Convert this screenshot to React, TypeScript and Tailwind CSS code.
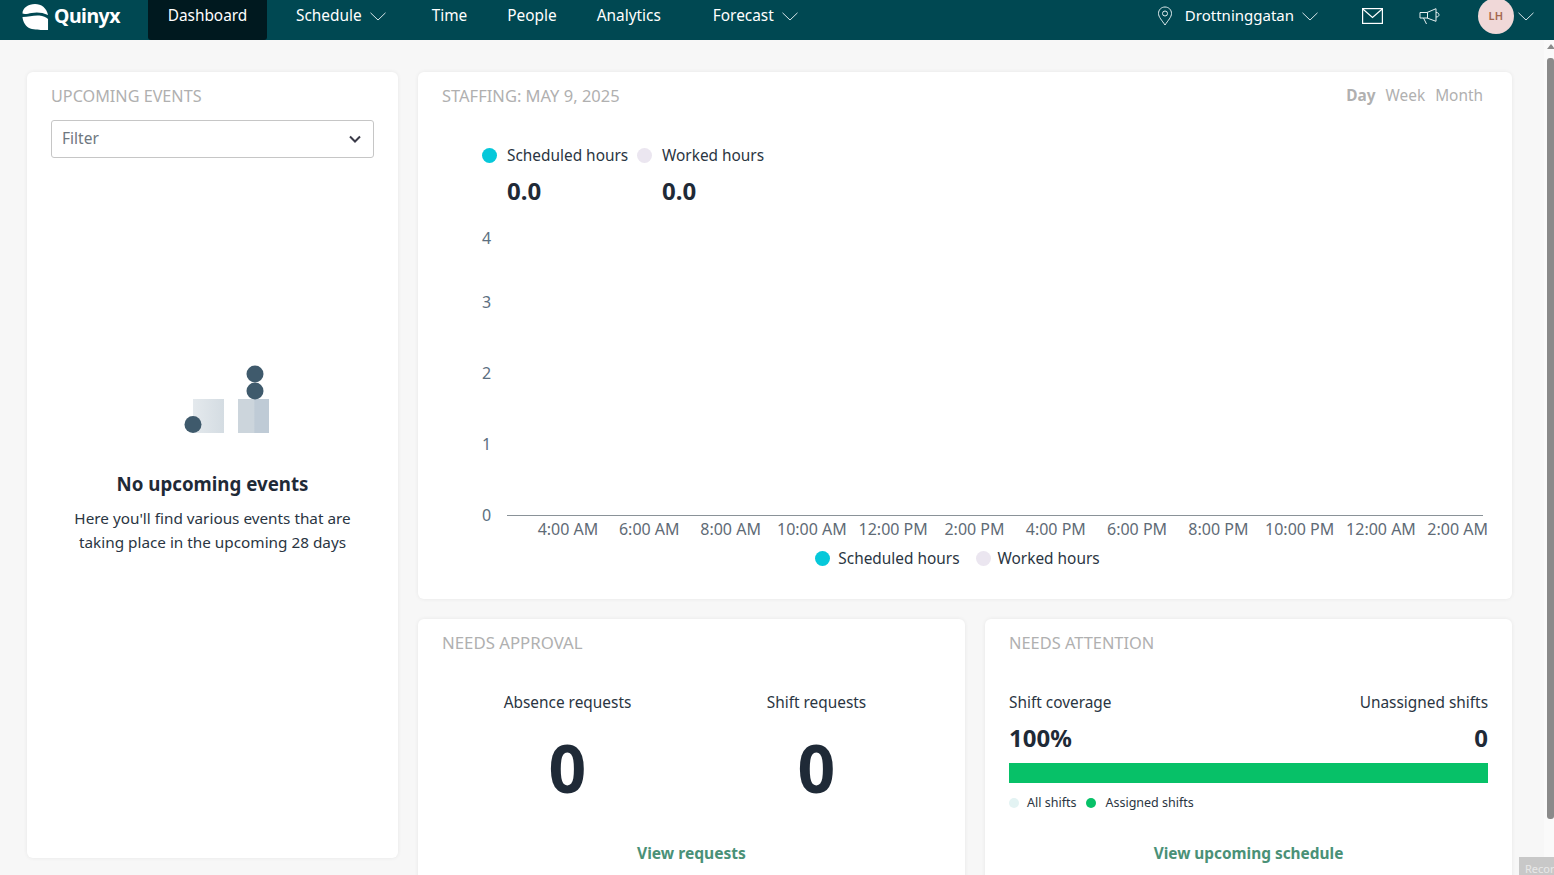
import React from "react";

const F = "[font-family:'Noto_Sans',sans-serif]";

function Chevron({ className = "" }: { className?: string }) {
  return (
    <svg viewBox="0 0 16 9" className={`w-[16px] h-[9px] ${className}`} fill="none" stroke="currentColor" strokeWidth="1">
      <path d="M0.5 0.8 L8 8 L15.5 0.8" />
    </svg>
  );
}

function NavItem({ label, active, chevron, className = "" }: { label: string; active?: boolean; chevron?: boolean; className?: string }) {
  return (
    <div className={`h-full pb-[8px] flex items-center gap-[8px] text-white text-[15.4px] ${active ? "bg-[#00191f] rounded-b-[3px]" : ""} ${className}`}>
      <span>{label}</span>
      {chevron && <Chevron className="text-[#d5e4e7]" />}
    </div>
  );
}

function Logo() {
  return (
    <svg viewBox="0 0 28 28" className="w-[27px] h-[27px]">
      <path d="M0.500 11C0.500 5 6.500 1 13.500 1 20 1 25.500 5 27 12.500 21 9.500 15 9.300 10 10.300 6.500 11 3 11.800 0.500 11Z" fill="#fff" />
      <path d="M0.500 14.500C7 14.500 12 12.500 18 13 22 13.300 25 14.800 27 16.500L27 28 21 28C20 28 13 28 8.500 26.500 4 24.500 1 20 0.500 14.500Z" fill="#fff" />
    </svg>
  );
}

function Dot({ color, size = "w-[15px] h-[15px]" }: { color: string; size?: string }) {
  return <span className={`inline-block rounded-full ${size} ${color}`} />;
}

function Card({ className = "", children }: { className?: string; children: React.ReactNode }) {
  return <div className={`bg-white rounded-[6px] shadow-[0_0_4px_rgba(0,0,0,0.07)] ${className}`}>{children}</div>;
}

function Title({ children, size = "text-[16.2px]" }: { children: React.ReactNode; size?: string }) {
  return <div className={`${size} leading-[20px] text-[#b0b0b0]`}>{children}</div>;
}

const hours = ["4:00 AM", "6:00 AM", "8:00 AM", "10:00 AM", "12:00 PM", "2:00 PM", "4:00 PM", "6:00 PM", "8:00 PM", "10:00 PM", "12:00 AM"];
const yTicks: [string, number][] = [["4", 244], ["3", 308], ["2", 379], ["1", 450], ["0", 521]];

function Chart() {
  return (
    <svg viewBox="0 0 1094 320" className="mt-[16px] w-[1094px] h-[320px] block" fontFamily="'Noto Sans', sans-serif">
      {yTicks.map(([t, y]) => (
        <text key={t} x="64" y={y - 224} fontSize="16" fill="#5c6f80">{t}</text>
      ))}
      <line x1="89" x2="1065" y1="291.500" y2="291.500" stroke="#8a9298" strokeWidth="1" />
      {hours.map((h, i) => (
        <text key={h + i} x={150 + i * 81.3} y="311" fontSize="16" textAnchor="middle" fill="#5f6b76">{h}</text>
      ))}
      <text x="1070" y="311" fontSize="16" textAnchor="end" fill="#5f6b76">2:00 AM</text>
    </svg>
  );
}

export default function App() {
  return (
    <div className={`relative w-[1554px] h-[875px] overflow-hidden bg-[#f7f7f7] flex flex-col text-[#1f2a37] ${F}`}>
      <header className="h-[40px] shrink-0 bg-[#004852] flex items-center text-white">
        <div className="w-[148px] h-full pb-[8px] flex items-center pl-[22px] gap-[5px]">
          <Logo />
          <span className="text-[19.500px] font-bold tracking-[-0.5px]">Quinyx</span>
        </div>
        <NavItem label="Dashboard" active className="w-[119px] justify-center" />
        <NavItem label="Schedule" chevron className="ml-[29px]" />
        <NavItem label="Time" className="ml-[46px]" />
        <NavItem label="People" className="ml-[40px]" />
        <NavItem label="Analytics" className="ml-[40px]" />
        <NavItem label="Forecast" chevron className="ml-[52px]" />
        <div className="ml-auto flex items-center h-full pb-[8px]">
          <svg viewBox="0 0 16 20" className="w-[16px] h-[20px] text-[#e3eef0]" fill="none" stroke="currentColor" strokeWidth="1">
            <path d="M8 19C5 14.500 1.500 11 1.500 7.500 1.500 3.700 4.400 1 8 1s6.500 2.700 6.500 6.500C14.500 11 11 14.500 8 19Z" />
            <circle cx="8" cy="7.500" r="2.500" />
          </svg>
          <span className="ml-[12px] mb-[2px] text-[15px] text-white">Drottninggatan</span>
          <Chevron className="ml-[8px] text-[#d5e4e7]" />
          <svg viewBox="0 0 21 16" className="w-[21px] h-[16px] ml-[44px]" fill="none" stroke="#fff" strokeWidth="1.200">
            <rect x="0.600" y="0.600" width="19.800" height="14.800" />
            <path d="M0.800 1L10.500 9.500 20.200 1" />
          </svg>
          <svg viewBox="0 0 21 17" className="w-[21px] h-[17px] ml-[36px]" fill="none" stroke="#e8f0f1" strokeWidth="1">
            <path d="M1 4.500H8L17 0.700V13.300L8 10H1Z" />
            <path d="M17 4.500C19 4.500 20 5.500 20 6.800S19 9 17 9" />
            <path d="M4.500 10L7.500 16" />
            <path d="M8.500 4.500V10" />
          </svg>
          <div className="ml-[38px] w-[36px] h-[36px] shrink-0 rounded-full bg-[#f0d8d8] flex items-center justify-center text-[11px] font-semibold text-[#a4674f] tracking-[0.3px]">LH</div>
          <Chevron className="ml-[4px] mr-[20px] text-[#d5e4e7]" />
        </div>
      </header>

      <main className="flex-1 min-h-0 flex items-start gap-[20px] pl-[27px] pt-[32px]">
        <Card className="w-[371px] h-[786px] shrink-0 px-[24px] pt-[14px] flex flex-col">
          <Title>UPCOMING EVENTS</Title>
          <div className="mt-[14px] h-[38px] border border-[#c6c6c6] rounded-[3px] flex items-center justify-between pl-[10px] pr-[12px]">
            <span className="text-[15.500px] text-[#6f7780]">Filter</span>
            <svg viewBox="0 0 12 8" className="w-[12px] h-[8px]" fill="none" stroke="#3a3a48" strokeWidth="2"><path d="M1 1.500L6 6.500 11 1.500" /></svg>
          </div>
          <div className="mt-[207px] flex flex-col items-center">
            <svg viewBox="11 0 86 70" className="w-[86px] h-[70px] ml-[29px]">
              <defs>
                <linearGradient id="a" x1="0" x2="1" y1="0" y2="0"><stop offset="0" stopColor="#e4e9ed" /><stop offset="1" stopColor="#d4dce2" /></linearGradient>
                <linearGradient id="b" x1="0" x2="1" y1="0" y2="0"><stop offset="0" stopColor="#ccd5dc" /><stop offset="0.5" stopColor="#ccd5dc" /><stop offset="0.55" stopColor="#bfcbd6" /><stop offset="1" stopColor="#bfcbd6" /></linearGradient>
              </defs>
              <rect x="20" y="34" width="31" height="34" fill="url(#a)" />
              <rect x="65" y="34" width="31" height="34" fill="url(#b)" />
              <circle cx="20" cy="59.500" r="8.500" fill="#3f5a6c" />
              <circle cx="82" cy="9" r="8.500" fill="#3f5a6c" />
              <circle cx="82" cy="26" r="8.500" fill="#3f5a6c" />
            </svg>
            <div className="mt-[36px] text-[18.700px] leading-[26px] font-bold text-[#1f2a37]">No upcoming events</div>
            <div className="mt-[9px] text-[15.300px] leading-[24px] text-center text-[#2a3542]">
              Here you'll find various events that are<br />taking place in the upcoming 28 days
            </div>
          </div>
        </Card>

        <div className="w-[1094px] shrink-0 flex flex-col gap-[20px]">
          <Card className="h-[527px] pt-[14px]">
            <div className="flex justify-between px-[24px] pr-[29px]">
              <Title size="text-[16.500px]">STAFFING: MAY 9, 2025</Title>
              <div className="flex gap-[10px] text-[15.400px] leading-[20px] text-[#b0b0b0]">
                <span className="font-bold">Day</span><span>Week</span><span>Month</span>
              </div>
            </div>
            <div className="mt-[38px] ml-[64px] flex text-[15.400px] leading-[20px] text-[#2a3542]">
              <div className="w-[155px]">
                <div className="flex items-center gap-[10px]"><Dot color="bg-[#06c8da]" /><span className="pt-[2px]">Scheduled hours</span></div>
                <div className="ml-[25px] mt-[8px] text-[24px] leading-[34px] font-bold text-[#1f2a37]">0.0</div>
              </div>
              <div>
                <div className="flex items-center gap-[10px]"><Dot color="bg-[#ebe6f0]" /><span className="pt-[2px]">Worked hours</span></div>
                <div className="ml-[25px] mt-[8px] text-[24px] leading-[34px] font-bold text-[#1f2a37]">0.0</div>
              </div>
            </div>
            <Chart />
            <div className="mt-[3px] flex justify-center gap-[16px] ml-[-15px] text-[15.400px] leading-[20px] text-[#2a3542]">
              <div className="flex items-center gap-[8px]"><Dot color="bg-[#06c8da]" /><span className="pt-[2px]">Scheduled hours</span></div>
              <div className="flex items-center gap-[7px]"><Dot color="bg-[#ebe6f0]" /><span className="pt-[2px]">Worked hours</span></div>
            </div>
          </Card>

          <div className="flex gap-[20px]">
            <Card className="w-[547px] h-[300px] px-[24px] pt-[14px]">
              <Title size="text-[16.800px]">NEEDS APPROVAL</Title>
              <div className="mt-[40px] flex text-[#2a3542] pl-[1px]">
                {["Absence requests", "Shift requests"].map((l) => (
                  <div key={l} className="w-[249px] flex flex-col items-center">
                    <div className="text-[15.400px] leading-[20px]">{l}</div>
                    <div className="mt-[19px] text-[66px] leading-[70px] font-bold text-[#1f2a37]">0</div>
                  </div>
                ))}
              </div>
              <div className="mt-[41px] text-center text-[15.600px] leading-[20px] font-bold text-[#4a9177]">View requests</div>
            </Card>
            <Card className="w-[527px] h-[300px] px-[24px] pt-[14px]">
              <Title size="text-[16.400px]">NEEDS ATTENTION</Title>
              <div className="mt-[40px] flex justify-between text-[15.400px] leading-[20px] text-[#2a3542]">
                <span>Shift coverage</span><span>Unassigned shifts</span>
              </div>
              <div className="mt-[8px] flex justify-between text-[24px] leading-[34px] font-bold text-[#1f2a37]">
                <span>100%</span><span>0</span>
              </div>
              <div className="mt-[8px] h-[20px] bg-[#07c168]" />
              <div className="mt-[10px] flex items-center text-[12.500px] leading-[20px] text-[#2a3542]">
                <Dot color="bg-[#e3f3f3]" size="w-[10px] h-[10px]" />
                <span className="ml-[8px]">All shifts</span>
                <span className="ml-[10px] flex"><Dot color="bg-[#07c168]" size="w-[10px] h-[10px]" /></span>
                <span className="ml-[9px]">Assigned shifts</span>
              </div>
              <div className="mt-[31px] text-center text-[15.400px] leading-[20px] font-bold text-[#4a9177]">View upcoming schedule</div>
            </Card>
          </div>
        </div>
      </main>

      <div className="absolute right-0 top-[40px] bottom-0 w-[10px] bg-[#fafafa]">
        <div className="absolute left-[3px] top-[4px] w-0 h-0 border-x-[4px] border-x-transparent border-b-[5px] border-b-[#8a8a8a]" />
        <div className="absolute left-[3px] top-[18px] w-[7px] h-[761px] bg-[#8a8a8a] rounded-[3px]" />
      </div>
      <div className="absolute left-[1519px] top-[857px] w-[35px] h-[18px] bg-[#c8c8c8] overflow-hidden pl-[6px] pt-[5px] text-[11px] leading-[14px] text-[#e8e8e8] whitespace-nowrap">Record</div>
    </div>
  );
}
